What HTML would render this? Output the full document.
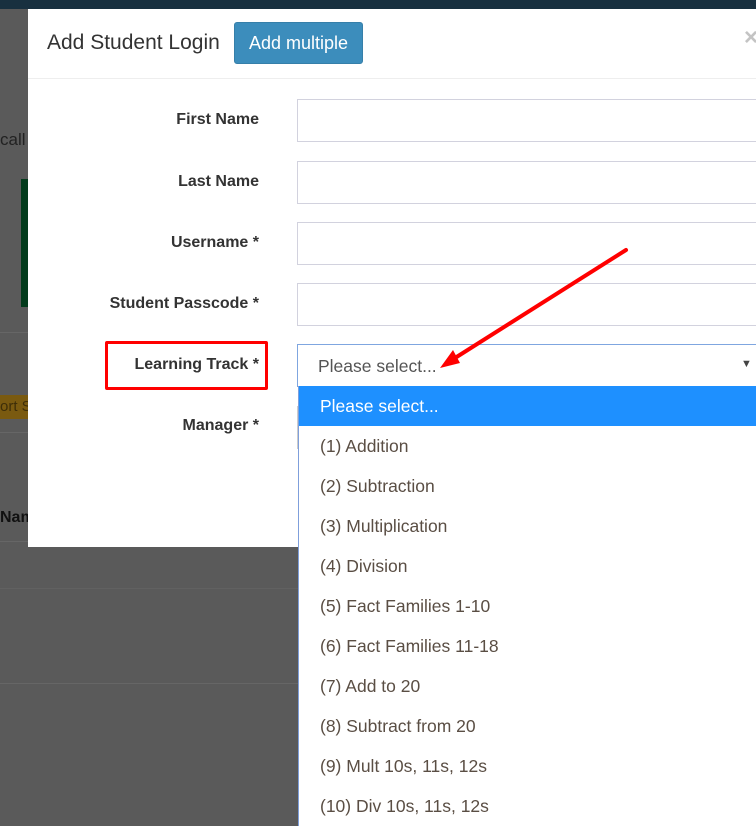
<!DOCTYPE html>
<html><head><style>
*{margin:0;padding:0;box-sizing:border-box}
body{width:756px;height:817px;overflow:hidden;background:#5a5a5a;position:relative;font-family:"Liberation Sans",Arial,sans-serif}
.a{position:absolute}
.lbl{position:absolute;right:497px;font-weight:bold;font-size:16px;color:#333;text-align:right;white-space:nowrap}
.inp{position:absolute;left:297px;width:470px;height:43px;border:1px solid #d2d2de;background:#fff}
.opt{height:40px;line-height:40px;padding-left:21px;font-size:17.5px;color:#5a4e44}
</style></head><body>
<div class="a" style="left:0;top:0;width:756px;height:9px;background:#18303f"></div>
<div class="a" style="left:0;top:130px;font-size:17px;color:#222">call (</div>
<div class="a" style="left:21px;top:179px;width:10px;height:128px;background:#033b1c"></div>
<div class="a" style="left:0;top:332px;width:30px;height:1px;background:#666"></div>
<div class="a" style="left:0;top:395px;width:30px;height:24px;background:#7a5a10;color:#3e2e08;font-size:15px;line-height:24px;white-space:nowrap;overflow:hidden">ort St</div>
<div class="a" style="left:0;top:432px;width:30px;height:1px;background:#666"></div>
<div class="a" style="left:0;top:509px;font-size:16px;font-weight:bold;color:#111">Nam</div>
<div class="a" style="left:0;top:541px;width:30px;height:1px;background:#666"></div>
<div class="a" style="left:0;top:588px;width:300px;height:1px;background:#616161"></div>
<div class="a" style="left:0;top:683px;width:300px;height:1px;background:#666"></div>

<div class="a" style="left:28px;top:9px;width:740px;height:538px;background:#fff"></div>
<div class="a" style="left:28px;top:78px;width:740px;height:1px;background:#eee"></div>
<div class="a" style="left:47px;top:31px;font-size:21px;color:#333">Add Student Login</div>
<div class="a" style="left:234px;top:22px;width:129px;height:42px;background:#3c8dbc;border-radius:3px;border:1px solid #367fa9;color:#fff;font-size:18px;line-height:40px;text-align:center">Add multiple</div>
<div class="a" style="left:744px;top:24px;font-size:24px;font-weight:bold;color:#c4c4c4">×</div>

<div class="lbl" style="top:111px">First Name</div>
<div class="lbl" style="top:173px">Last Name</div>
<div class="lbl" style="top:234px">Username *</div>
<div class="lbl" style="top:295px">Student Passcode *</div>
<div class="lbl" style="top:356px">Learning Track *</div>
<div class="lbl" style="top:417px">Manager *</div>
<div class="a" style="left:105px;top:341px;width:163px;height:49px;border:3px solid #f00;border-radius:2px"></div>

<div class="inp" style="top:99px"></div>
<div class="inp" style="top:161px"></div>
<div class="inp" style="top:222px"></div>
<div class="inp" style="top:283px"></div>
<div class="inp" style="top:344px;border-color:#7fa6e0;height:43px"><span class="a" style="left:20px;top:11px;font-size:17.5px;color:#555">Please select...</span><span class="a" style="left:443px;top:13px;font-size:11px;color:#444">▼</span></div>
<div class="inp" style="top:406px;border-color:#ccc"></div>

<div class="a" style="left:298px;top:386px;width:470px;height:440px;background:#fff;border-left:1px solid #7f9fdb">
<div class="opt" style="background:#1e90ff;color:#fff">Please select...</div>
<div class="opt">(1) Addition</div>
<div class="opt">(2) Subtraction</div>
<div class="opt">(3) Multiplication</div>
<div class="opt">(4) Division</div>
<div class="opt">(5) Fact Families 1-10</div>
<div class="opt">(6) Fact Families 11-18</div>
<div class="opt">(7) Add to 20</div>
<div class="opt">(8) Subtract from 20</div>
<div class="opt">(9) Mult 10s, 11s, 12s</div>
<div class="opt">(10) Div 10s, 11s, 12s</div>
</div>

<svg class="a" style="left:0;top:0" width="756" height="817">
<line x1="626" y1="250" x2="455" y2="358" stroke="#f00" stroke-width="4" stroke-linecap="round"/>
<polygon points="440,368 453,350 460,363" fill="#f00"/>
</svg>
</body></html>
